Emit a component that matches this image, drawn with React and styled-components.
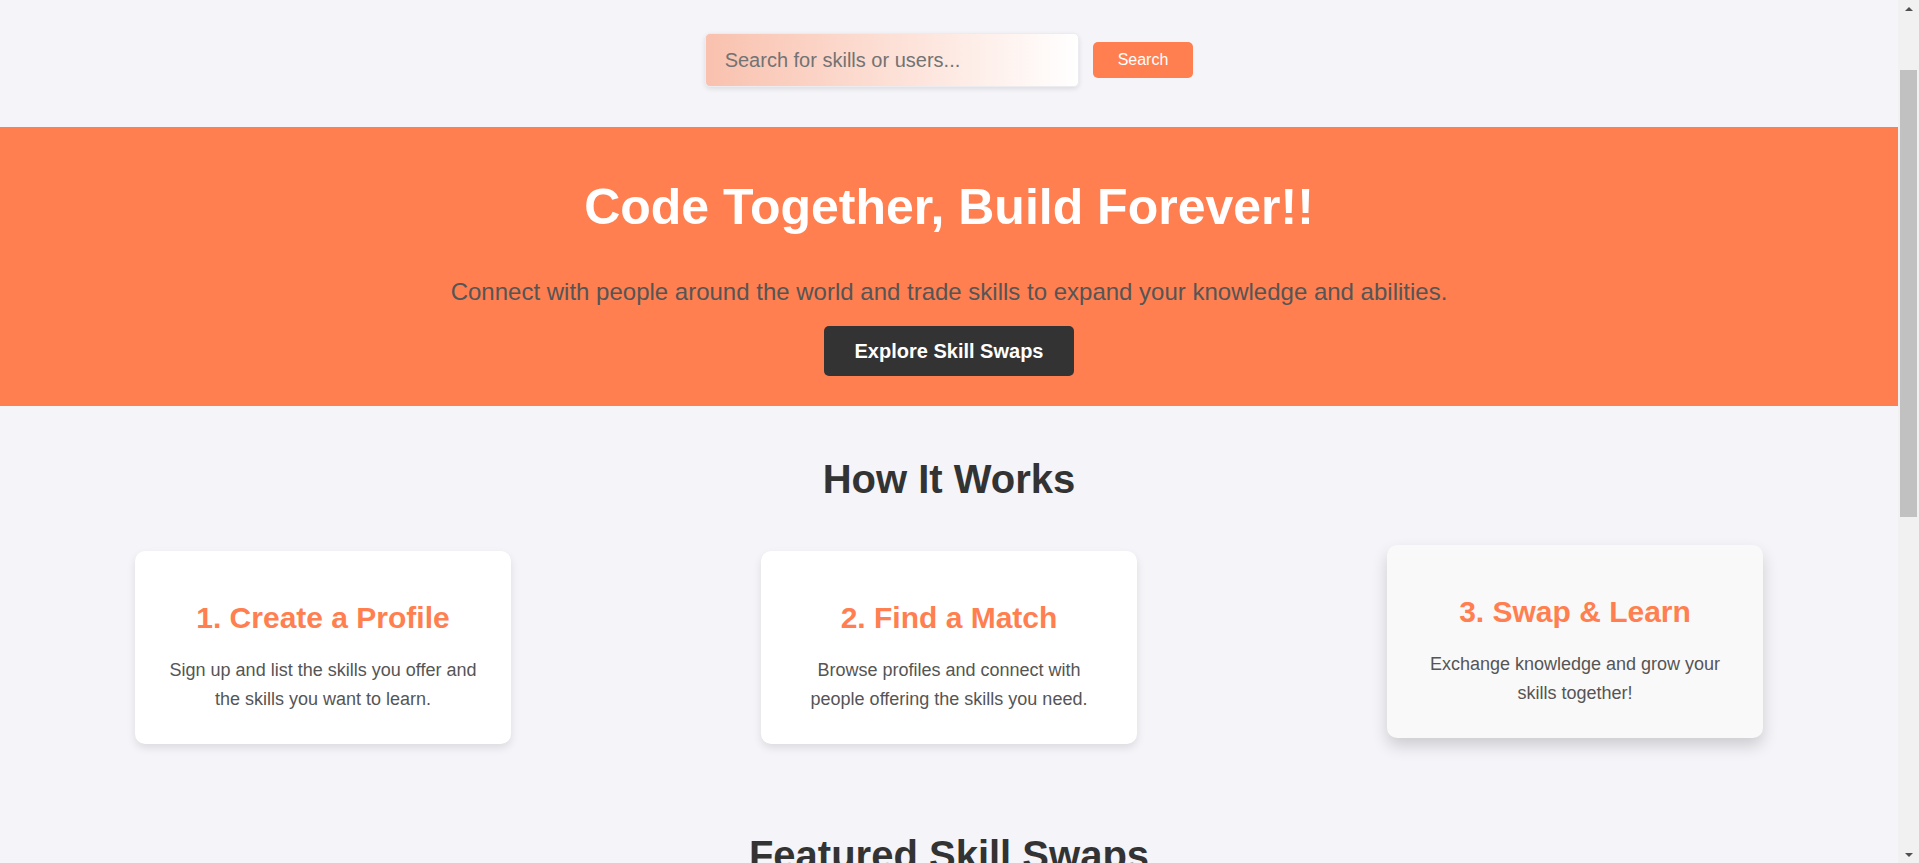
import React from "react";
import styled, { createGlobalStyle, css } from "styled-components";

const GlobalStyle = createGlobalStyle`
  html, body {
    margin: 0;
    padding: 0;
    background: #f4f4f9;
    font-family: "Liberation Sans", Arial, sans-serif;
    color: #333;
  }
  * { box-sizing: border-box; }
  html { scrollbar-width: none; }
  ::-webkit-scrollbar { display: none; }
`;

const CORAL = "#ff7f50";

const Viewport = styled.div`
  display: flex;
  align-items: flex-start;
`;

const Page = styled.div`
  flex: 1;
  min-width: 0;
  display: flex;
  flex-direction: column;
  min-height: 1498px;
`;

/* window scrollbar, as in the screenshot */
const ScrollRail = styled.div`
  position: sticky;
  top: 0;
  flex: 0 0 21px;
  height: 100vh;
  display: flex;
  flex-direction: column;
  background: #f1f1f1;
`;

const RailButton = styled.div`
  flex: 0 0 17px;
  display: flex;
  align-items: center;
  justify-content: center;
`;

const Arrow = styled.span`
  width: 0;
  height: 0;
  border-left: 4.5px solid transparent;
  border-right: 4.5px solid transparent;
  ${(p) =>
    p.$down
      ? css`border-top: 4.5px solid #505050;`
      : css`border-bottom: 4.5px solid #505050;`}
`;

const RailTrack = styled.div`
  flex: 1;
  display: flex;
  flex-direction: column;
  padding: 53px 2px 0;
`;

const RailThumb = styled.div`
  height: 447px;
  background: #c1c1c1;
`;

const SearchBar = styled.form`
  display: flex;
  justify-content: center;
  align-items: center;
  gap: 14px;
  padding: 33px 0 40px;
`;

const SearchInput = styled.input`
  width: 374px;
  height: 54px;
  padding: 15px 19px;
  font-family: "Liberation Sans", Arial, sans-serif;
  font-size: 20px;
  line-height: 24px;
  color: #333;
  border: 1px solid #ececf0;
  border-radius: 5px;
  background: linear-gradient(to right, #f9c1ae, #fde3da 55%, #ffffff);
  box-shadow: 0 2px 5px rgba(0, 0, 0, 0.1);
  outline: none;

  &::placeholder {
    color: #737373;
  }
`;

const SearchButton = styled.button`
  padding: 9px 25px;
  font-family: "Liberation Sans", Arial, sans-serif;
  font-size: 16px;
  line-height: 18px;
  color: #fff;
  background: ${CORAL};
  border: none;
  border-radius: 5px;
  cursor: pointer;
`;

const Hero = styled.section`
  display: flex;
  flex-direction: column;
  align-items: center;
  padding: 52px 20px 30px;
  background: ${CORAL};
  text-align: center;
`;

const HeroTitle = styled.h1`
  margin: 0 0 43px;
  font-size: 50px;
  line-height: 56px;
  font-weight: 700;
  color: #fff;
`;

const HeroText = styled.p`
  margin: 0 0 20px;
  font-size: 24px;
  line-height: 28px;
  color: #555;
`;

const CtaButton = styled.button`
  padding: 13px 31px;
  font-family: "Liberation Sans", Arial, sans-serif;
  font-size: 20px;
  line-height: 24px;
  font-weight: 700;
  color: #fff;
  background: #333;
  border: none;
  border-radius: 5px;
  cursor: pointer;
`;

const Section = styled.section`
  display: flex;
  flex-direction: column;
  padding: ${(p) => p.$pad || "50px 0 0"};
`;

const SectionTitle = styled.h2`
  margin: 0 0 49px;
  font-size: 40px;
  line-height: 46px;
  font-weight: 700;
  text-align: center;
  color: #333;
`;

const CardRow = styled.div`
  display: flex;
  justify-content: space-around;
  padding: 0 10px;
`;

const StepCard = styled.div`
  flex: 0 0 20%;
  padding: 30px;
  text-align: center;
  background: #fff;
  border-radius: 10px;
  box-shadow: 0 4px 8px rgba(0, 0, 0, 0.1);

  ${(p) =>
    p.$raised &&
    css`
      background: #f9f9f9;
      transform: translateY(-6px);
      box-shadow: 0 8px 16px rgba(0, 0, 0, 0.16);
    `}
`;

const StepTitle = styled.h3`
  margin: 20px 0 21px;
  font-size: 30px;
  line-height: 34px;
  font-weight: 700;
  color: ${CORAL};
`;

const StepText = styled.p`
  margin: 0;
  font-size: 18px;
  line-height: 1.6;
  color: #555;
`;

const SwapCard = styled.div`
  flex: 0 0 20%;
  display: flex;
  flex-direction: column;
  align-items: center;
  gap: 10px;
  padding: 30px;
  background: #fff;
  border-radius: 10px;
  box-shadow: 0 4px 8px rgba(0, 0, 0, 0.1);
  text-align: center;
`;

const Avatar = styled.div`
  width: 70px;
  height: 70px;
  border-radius: 50%;
  display: flex;
  align-items: center;
  justify-content: center;
  background: ${CORAL};
  color: #fff;
  font-size: 28px;
  font-weight: 700;
`;

const SwapName = styled.h4`
  margin: 0;
  font-size: 22px;
  color: #333;
`;

const SwapLine = styled.p`
  margin: 0;
  font-size: 16px;
  color: #555;
`;

const Footer = styled.footer`
  margin-top: auto;
  padding: 40px 20px;
  background: #333;
  color: #fff;
  text-align: center;
  font-size: 16px;
`;

const steps = [
  {
    title: "1. Create a Profile",
    text: "Sign up and list the skills you offer and the skills you want to learn.",
  },
  {
    title: "2. Find a Match",
    text: "Browse profiles and connect with people offering the skills you need.",
  },
  {
    title: "3. Swap & Learn",
    text: "Exchange knowledge and grow your skills together!",
    raised: true,
  },
];

const swaps = [
  { name: "Alice", offers: "JavaScript", wants: "Python" },
  { name: "Ben", offers: "UI Design", wants: "React" },
  { name: "Chen", offers: "Machine Learning", wants: "Guitar" },
];

export default function App() {
  return (
    <>
      <GlobalStyle />
      <Viewport>
        <Page>
          <SearchBar onSubmit={(e) => e.preventDefault()}>
            <SearchInput type="text" placeholder="Search for skills or users..." />
            <SearchButton type="submit">Search</SearchButton>
          </SearchBar>

          <Hero>
            <HeroTitle>Code Together, Build Forever!!</HeroTitle>
            <HeroText>
              Connect with people around the world and trade skills to expand your
              knowledge and abilities.
            </HeroText>
            <CtaButton type="button">Explore Skill Swaps</CtaButton>
          </Hero>

          <Section>
            <SectionTitle>How It Works</SectionTitle>
            <CardRow>
              {steps.map((s) => (
                <StepCard key={s.title} $raised={s.raised}>
                  <StepTitle>{s.title}</StepTitle>
                  <StepText>{s.text}</StepText>
                </StepCard>
              ))}
            </CardRow>
          </Section>

          <Section $pad="88px 0 80px">
            <SectionTitle>Featured Skill Swaps</SectionTitle>
            <CardRow>
              {swaps.map((s) => (
                <SwapCard key={s.name}>
                  <Avatar>{s.name[0]}</Avatar>
                  <SwapName>{s.name}</SwapName>
                  <SwapLine>Offers: {s.offers}</SwapLine>
                  <SwapLine>Wants: {s.wants}</SwapLine>
                </SwapCard>
              ))}
            </CardRow>
          </Section>

          <Footer>© 2024 Skill Swap. All rights reserved.</Footer>
        </Page>

        <ScrollRail aria-hidden="true">
          <RailButton>
            <Arrow />
          </RailButton>
          <RailTrack>
            <RailThumb />
          </RailTrack>
          <RailButton>
            <Arrow $down />
          </RailButton>
        </ScrollRail>
      </Viewport>
    </>
  );
}
